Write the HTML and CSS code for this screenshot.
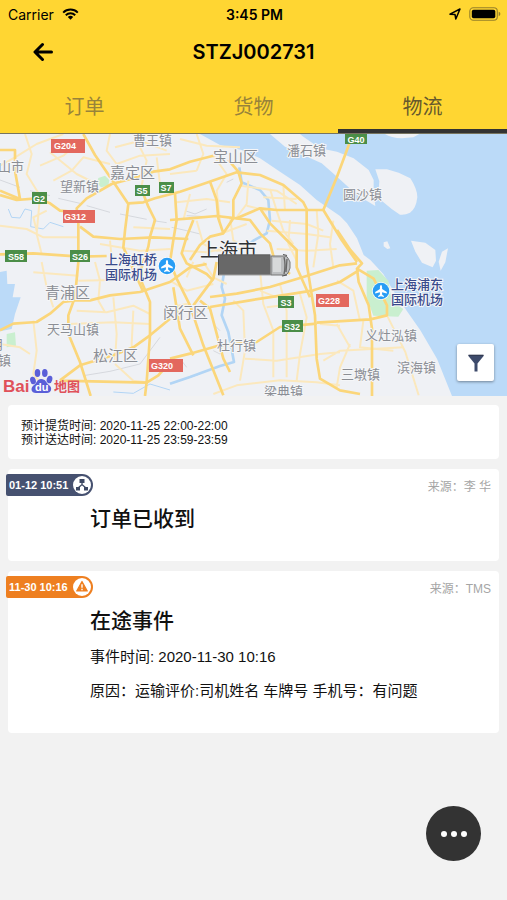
FILE: index.html
```
<!DOCTYPE html>
<html lang="zh-CN">
<head>
<meta charset="utf-8">
<meta name="viewport" content="width=device-width, initial-scale=1">
<title>STZJ002731</title>
<link rel="stylesheet" href="styles.css">
</head>
<body>
<header class="header">
  <div class="status">
    <div class="status-left">
      <span class="carrier">Carrier</span>
      <svg class="wifi" viewBox="0 0 17 12" aria-hidden="true"><path d="M1.2 4.6a10.4 10.4 0 0 1 14.6 0M3.8 7.2a6.7 6.7 0 0 1 9.4 0" fill="none" stroke="#000" stroke-width="2"/><path d="M8.500 11.800 5.800 9a3.800 3.800 0 0 1 5.400 0z"/></svg>
    </div>
    <span class="clock">3:45 PM</span>
    <div class="status-right">
      <svg class="locate" viewBox="0 0 12 12" aria-hidden="true"><path d="M1 6.200 11 1 6.800 11 6 6.500z" fill="none" stroke="#000" stroke-width="1.500" stroke-linejoin="round"/></svg>
      <svg class="battery" viewBox="0 0 32 14" aria-hidden="true"><rect x=".8" y=".8" width="27.500" height="12.400" rx="3.500" fill="none" stroke="#97802a" stroke-width="1.100"/><rect x="2.800" y="2.800" width="23.500" height="8.400" rx="1.800"/><path d="M29.700 4.800q1.700.6 1.700 2.200t-1.700 2.200z" fill="#97802a"/></svg>
    </div>
  </div>
  <div class="titlebar">
    <button class="back" type="button" aria-label="返回"><svg viewBox="0 0 20 20" aria-hidden="true"><path d="M9.500 2.500 2 10l7.500 7.500M2.500 10H18.500" fill="none" stroke="#000" stroke-width="3" stroke-linecap="round" stroke-linejoin="round"/></svg></button>
    <h1>STZJ002731</h1>
  </div>
  <nav class="tabs">
    <a class="tab" href="#order">订单</a>
    <a class="tab" href="#goods">货物</a>
    <a class="tab tab-active" href="#logistics" aria-current="page">物流</a>
  </nav>
</header>

<main>
  <section class="map">
    <svg class="map-canvas" viewBox="0 0 507 262" role="img" aria-label="上海市地图">
      <rect width="507" height="262" fill="#eff1f5"/>
      <g transform="scale(.33333)">
        <g fill="#bbdaf8">
          <path d="M600 0 660 33 725 48 780 73 840 113 900 153 950 198 1020 246 1041 268 1071 313 1091 363 1111 378 1150 420 1180 470 1220 530 1261 589 1311 674 1356 786H1521V0z"/>
          <path d="M0 414 20 410 22 450 45 450 38 490 62 490 45 540 35 585 0 592z"/>
        </g>
        <g fill="#eff1f5">
          <path d="M810 0 855 38 910 63 965 88 1011 128 1071 183 1126 216 1121 178V138L1106 108 1061 73 1011 53 960 43 910 8 900 0z"/>
          <path d="M1126 106H1161L1196 116 1231 133Q1252 165 1252 190 1248 225 1230 236 1215 244 1200 242L1175 225 1145 200 1136 168 1138 142z"/>
          <path d="M1155 0Q1180 18 1240 10L1258 0zM1151 325 1162 322 1171 343 1162 345 1151 337zM1233 320 1276 326 1306 348 1308 380 1298 400 1266 386 1246 353zM1344 343 1326 353 1316 383 1322 410 1336 385z"/>
        </g>
        <g fill="#c9efcf">
          <path d="M295 132 315 125 328 138 325 155 303 160 292 148z"/>
          <path d="M1100 410 1135 408 1165 440 1175 500 1210 525 1195 548 1120 545 1100 490zM20 600 45 595 48 635 20 640z"/>
        </g>
        <g fill="none" stroke="#b2d5f5" stroke-linejoin="round">
          <path stroke-width="8" d="M718 100 725 145 780 168 805 198 810 258 800 298 760 320 730 345M675 400 665 459 675 494 665 544 685 594 702 684 660 696 570 729 510 749"/>
          <path stroke-width="3" d="M25 225 35 250 60 252 75 225 95 230 92 278 130 285 150 265 190 278M340 774 400 778 450 750 510 768M520 747 600 720"/>
        </g>
        <g fill="none" stroke="#c8cbd1" stroke-width="2">
          <path d="M0 138 60 160M90 170 150 185M175 193 240 208M260 215 330 235M360 240 440 256M460 260 500 266M250 725 330 712 420 690 480 610M555 230 585 240 620 225M560 245 620 248M515 280 560 290 600 300M680 145 700 135M560 700 545 680M660 590 645 575M640 650 660 660"/>
        </g>
        <g fill="none" stroke="#fbe8bd" stroke-width="6" stroke-linejoin="round">
          <path d="M0 95 45 70 110 30 190 0M75 0 95 60 80 120 120 185 110 300 125 360M120 95 190 65 240 20M150 55 230 120 290 150M215 110 250 70 330 90M330 0 320 50 350 90 420 65 510 60M400 0 440 80 420 180M470 70 480 150 510 170M345 40 420 20 500 50M160 140 215 110M0 275 80 285 130 310 235 310M140 230 100 250 110 290M330 320 335 370M300 330 420 350 510 345M400 280 510 285"/>
          <path d="M125 384 140 460 160 520M100 415 235 425M235 440 340 438 430 415M285 384 300 440 295 500 315 535M230 530 320 535 400 515 450 540M205 570 340 565 450 570M100 560 110 650 100 720 140 770M340 490 350 600 345 680M400 530 395 630 400 684M0 630 60 640 90 660M345 690 400 740 440 745"/>
          <path d="M590 0 610 60 590 110M540 15 620 35 720 40M640 65 680 120 650 170 660 260M510 120 590 110M530 205 620 195 690 205M550 258 570 180M745 140 740 210 710 250M720 155 830 170 890 210M740 215 800 230M810 165 830 230 850 290 880 330M850 155 855 230M790 190 890 195M815 260 920 270 970 290M870 258 865 330 890 380M800 290 920 300 990 310M830 345 920 350 1010 345M950 228 955 300 940 400M1000 260 990 330 1000 400M550 350 620 355 690 340M590 260 610 330 650 350 720 345M660 300 740 270M690 250 700 320 740 340"/>
          <path d="M700 500 730 530 735 650 720 740M780 410 790 510 820 590 820 730M840 450 860 530 860 730M900 480 920 550 900 660 890 740M735 674 830 680 960 660 1020 655M640 780 710 754 840 739 950 745 1020 754M780 470 830 490M960 570 1020 575M970 680 1020 650 1210 640M1050 630 1020 700 1010 760M1090 560 1080 640 1180 650M1010 570 1050 640M510 440 560 470 640 450M510 520 560 510 600 540M580 384 560 430M610 384 640 430 680 450M1011 440 1060 470 1080 560M800 520 880 510"/>
          <path d="M1161 544 1191 604 1216 654 1256 784"/>
        </g>
        <g fill="none" stroke="#fbd67a" stroke-width="8" stroke-linejoin="round">
          <path d="M250 0 285 63 340 143 385 210 375 290 370 340 390 384 430 474"/>
          <path d="M272 786 240 684 205 599 205 544 225 489 235 384 235 268 230 223 260 193 335 150 400 133 460 113 510 106 570 83 640 65"/>
          <path d="M0 183 50 198 110 193 150 208 180 230 235 235M0 48H45V110L60 195 0 170"/>
          <path d="M240 278 280 308 360 315 460 310 565 315"/>
          <path d="M385 208 430 205 465 193 540 173 620 146 710 115 780 123 850 153 910 205 920 225V388L945 544 950 674 960 734 1020 769 1080 780"/>
          <path d="M430 180 445 218 465 258 450 308 445 338 425 400 425 444 450 504V604L440 744 435 786"/>
          <path d="M0 361 100 358 240 368 320 366"/>
          <path d="M630 143 650 198 655 253 670 298 700 253V198L725 148 715 113 685 78"/>
          <path d="M510 258 570 253 650 246 710 253 780 223 830 228H970L1025 318 1071 384"/>
          <path d="M970 228 1011 128 1055 10M525 178 530 258 520 318 510 384 530 434"/>
          <path d="M710 253 750 258 780 298 810 328 825 384 870 420M780 223 810 268 860 318 890 348 890 400 930 490"/>
          <path d="M580 258 560 308 545 358 560 388 620 420 640 440M670 298 630 308 600 333 570 378"/>
          <path d="M1011 288 1051 348 1086 388 1071 404 1121 434 1161 514V544L1111 556 950 566M1071 404 1076 444 1106 514 1116 584V786"/>
          <path d="M0 589 40 569 110 564 150 539 190 504 225 499 270 499 330 484 420 474 510 444 570 400 620 390"/>
          <path d="M180 739 240 694 290 679 340 664 400 640 450 604 510 554M180 740 440 746 475 724 510 684"/>
          <path d="M510 674 570 659 660 634 770 624 840 579 950 569M530 434 570 514 610 634 670 784M600 500 630 524 670 674 690 714M520 460 540 584 580 664M580 514 640 434 650 384"/>
          <path d="M630 489 710 479 810 459 910 429 1020 394 1071 388M630 519 750 499 880 479 940 469 1020 444 1075 410"/>
        </g>
      </g>

      <g class="shield shield-red">
        <rect x="51" y="5" width="34" height="14"/><text x="65" y="15">G204</text>
        <rect x="63" y="76" width="32" height="13"/><text x="75" y="86">G312</text>
        <rect x="149" y="225" width="34" height="13"/><text x="162" y="235">G320</text>
        <rect x="316" y="160" width="33" height="13"/><text x="329" y="170">G228</text>
      </g>
      <g class="shield shield-green">
        <rect x="345" y="0" width="22" height="10"/><text x="356" y="9">G40</text>
        <rect x="32" y="58" width="15" height="12"/><text x="39" y="68">G2</text>
        <rect x="135" y="51" width="15" height="11"/><text x="142" y="60">S5</text>
        <rect x="159" y="48" width="15" height="11"/><text x="166" y="57">S7</text>
        <rect x="5" y="116" width="22" height="12"/><text x="16" y="126">S58</text>
        <rect x="70" y="116" width="20" height="12"/><text x="80" y="126">S26</text>
        <rect x="278" y="162" width="16" height="12"/><text x="286" y="172">S3</text>
        <rect x="282" y="186" width="21" height="12"/><text x="292" y="196">S32</text>
      </g>
      <g class="place">
        <text x="133" y="11">曹王镇</text><text x="60" y="57">望新镇</text>
        <text x="287" y="21">潘石镇</text><text x="343" y="65">圆沙镇</text>
        <text x="-2" y="37">山市</text><text x="47" y="200">天马山镇</text>
        <text x="-9" y="215">月</text><text x="-2" y="231">镇</text>
        <text x="217" y="216">杜行镇</text><text x="264" y="262">梁典镇</text>
        <text x="365" y="206">义灶泓镇</text><text x="397" y="238">滨海镇</text><text x="341" y="245">三墩镇</text>
      </g>
      <g class="place place-district">
        <text x="110" y="44">嘉定区</text><text x="213" y="28">宝山区</text><text x="45" y="164">青浦区</text>
        <text x="93" y="227">松江区</text><text x="163" y="184">闵行区</text>
      </g>
      <g class="place place-airport">
        <text x="105" y="130">上海虹桥</text><text x="105" y="145">国际机场</text>
        <text x="391" y="155">上海浦东</text><text x="391" y="170">国际机场</text>
      </g>
      <text class="place place-city" x="200" y="123">上海市</text>

      <defs>
        <g id="airport">
          <circle r="9" fill="#fff"/><circle r="8.300" fill="#289df5"/>
          <path d="M0-6.200q1.100.8 1.100 2.200v1.900L5.800 1v1.500L1.100 1.300v2.300l1.800 1.300v1L0 5.200l-2.900.7v-1l1.800-1.300V1.300l-4.700 1.200V1l4.700-3.100V-4q0-1.400 1.100-2.200z" fill="#fff"/>
        </g>
      </defs>
      <use href="#airport" x="167" y="132"/>
      <use href="#airport" x="381" y="157"/>

      <g>
        <rect x="218.500" y="121" width="52" height="20" fill="#686868" stroke="#a2a2a2"/>
        <path d="M218.500 141V121H270" fill="none" stroke="#444"/>
        <path d="M271 122h13.500q3 0 4 3l1.500 3v6l-1.500 4q-1 3-4 3h-13.500z" fill="#bcbec0" stroke="#777"/>
        <path d="M273 124h8v14h-8z" fill="#d7d9da"/>
        <path d="M284 123q2 8 0 17M287 125l-1 13" fill="none" stroke="#666" stroke-width="1.300"/>
        <path d="M283 120.500l4 1M282 142l5-1" stroke="#555" stroke-width="1.200"/>
      </g>

      <g>
        <text class="baidu-red baidu-latin" x="3" y="258">Bai</text>
        <g fill="#5a5fd8">
          <ellipse cx="33" cy="246.500" rx="2.800" ry="3.800" transform="rotate(-15 33 246.500)"/>
          <ellipse cx="37.500" cy="239" rx="2.800" ry="4"/>
          <ellipse cx="44.800" cy="239" rx="2.800" ry="4"/>
          <ellipse cx="49.500" cy="245.500" rx="2.800" ry="3.800" transform="rotate(15 49.500 245.500)"/>
          <path d="M41 245c5 0 5 4 8 6 4 3 2 8-2 8H36c-5 0-6-5-2-8 3-2 3-6 7-6z"/>
        </g>
        <text class="baidu-du" x="35" y="257">du</text>
        <text class="baidu-red baidu-cjk" x="54" y="257">地图</text>
      </g>
    </svg>
    <button class="filter" type="button" aria-label="筛选"><svg viewBox="0 0 18 18" aria-hidden="true"><path d="M1 1.500h16L10.500 9.500v8h-3v-8z" fill="#3d4a6b"/><path d="M1.500 1.300h15" stroke="#252e48" stroke-width="1.200"/></svg></button>
  </section>

  <div class="feed">
    <section class="card schedule">
      <p>预计提货时间: 2020-11-25 22:00-22:00</p>
      <p>预计送达时间: 2020-11-25 23:59-23:59</p>
    </section>

    <article class="card event">
      <div class="event-top">
        <div class="stamp stamp-navy">
          <time>01-12 10:51</time>
          <svg viewBox="0 0 18 18" aria-hidden="true"><circle cx="9" cy="9" r="9" fill="#fff"/><path d="M9 6v3M5 12 9 8.500 13 12" fill="none" stroke="#3e4964" stroke-width="1.300"/><path d="M6.500 3h5v4h-5zM3 11h4v3.500H3zM11 11h4v3.500h-4z" fill="#3e4964"/></svg>
        </div>
        <span class="source">来源：李 华</span>
      </div>
      <div class="event-body">
        <h2>订单已收到</h2>
      </div>
    </article>

    <article class="card event">
      <div class="event-top">
        <div class="stamp stamp-orange">
          <time>11-30 10:16</time>
          <svg viewBox="0 0 18 18" aria-hidden="true"><circle cx="9" cy="9" r="9" fill="#fff"/><path d="M9 3.500 14.300 13H3.700z" fill="#ee7f20" stroke="#ee7f20" stroke-width="1.200" stroke-linejoin="round"/><path d="M9 6.300v3.500M9 10.800v1.500" stroke="#fff" stroke-width="1.400"/></svg>
        </div>
        <span class="source">来源：TMS</span>
      </div>
      <div class="event-body">
        <h2>在途事件</h2>
        <div class="details">
          <p>事件时间: 2020-11-30 10:16</p>
          <p>原因：运输评价:司机姓名 车牌号 手机号：有问题</p>
        </div>
      </div>
    </article>
  </div>
</main>

<button class="more" type="button" aria-label="更多"><svg viewBox="0 0 26 6" aria-hidden="true"><circle cx="3" cy="3" r="3"/><circle cx="13" cy="3" r="3"/><circle cx="23" cy="3" r="3"/></svg></button>
</body>
</html>
```
FILE: styles.css
```
* {
  box-sizing: border-box;
}

body {
  margin: 0;
  min-height: 100vh;
  background: #f2f2f2;
  color: #111;
  font-family: "Liberation Sans", "Noto Sans CJK SC", sans-serif;
}

h1,
h2,
p {
  margin: 0;
}

button {
  display: flex;
  align-items: center;
  justify-content: center;
  padding: 0;
  border: 0;
  cursor: pointer;
}

svg {
  display: block;
}

/* Header */
.header {
  background: #ffd632;
  color: #000;
  font-family: Inter, "Noto Sans CJK SC", sans-serif;
}

.status {
  display: grid;
  grid-template-columns: 1fr auto 1fr;
  align-items: center;
  height: 28px;
  padding: 0 6px 0 8px;
}

.status-left,
.status-right {
  display: flex;
  align-items: center;
  gap: 8px;
}

.status-right {
  justify-content: flex-end;
}

.carrier {
  font-size: 14px;
}

.clock {
  font-size: 14px;
  font-weight: 600;
}

.wifi {
  width: 17px;
  height: 12px;
}

.locate {
  width: 12px;
  height: 12px;
}

.battery {
  width: 32px;
  height: 14px;
}

.titlebar {
  display: grid;
  grid-template-columns: 32px 1fr 32px;
  align-items: center;
  height: 48px;
  padding: 0 27px;
}

.back {
  height: 32px;
  background: none;
}

.back svg {
  width: 20px;
  height: 20px;
}

.titlebar h1 {
  font-size: 20px;
  font-weight: 600;
  text-align: center;
}

.tabs {
  display: grid;
  grid-template-columns: repeat(3, 1fr);
  height: 58px;
  border-bottom: 1px solid #77745f;
}

.tab {
  display: flex;
  align-items: center;
  justify-content: center;
  padding-top: 6px;
  border-bottom: 4px solid transparent;
  color: #98833a;
  font-size: 20px;
  text-decoration: none;
}

.tab-active {
  border-bottom-color: #333;
  color: #66592d;
}

/* Map */
.map {
  position: relative;
}

.map-canvas {
  width: 100%;
  height: auto;
}

.place {
  fill: #8b8e95;
  stroke: #f5f6f8;
  stroke-width: 2px;
  paint-order: stroke;
  font-family: "Noto Sans CJK SC", sans-serif;
  font-size: 13px;
}

.place-district {
  font-size: 15px;
}

.place-airport {
  fill: #3a4b8c;
  font-weight: 500;
}

.place-city {
  fill: #2f3134;
  font-size: 19px;
}

.shield text {
  fill: #fff;
  font-family: "Liberation Sans", sans-serif;
  font-size: 9px;
  font-weight: 700;
  text-anchor: middle;
}

.shield-red {
  fill: #e3685e;
}

.shield-green {
  fill: #4b8e48;
}

.baidu-red {
  fill: #e0515a;
  font-weight: 700;
}

.baidu-latin {
  font-family: "Liberation Sans", sans-serif;
  font-size: 17px;
}

.baidu-cjk {
  font-family: "Noto Sans CJK SC", sans-serif;
  font-size: 13px;
}

.baidu-du {
  fill: #fff;
  font-family: "Liberation Sans", sans-serif;
  font-size: 11px;
  font-weight: 700;
}

.filter {
  position: absolute;
  right: 13px;
  bottom: 15px;
  width: 37px;
  height: 37px;
  border-radius: 2px;
  background: #fff;
  box-shadow: 0 1px 3px rgba(0, 0, 0, 0.4);
}

.filter svg {
  width: 18px;
  height: 18px;
}

/* Cards */
.feed {
  display: grid;
  gap: 10px;
  padding: 9px 8px;
}

.card {
  border-radius: 4px;
  background: #fff;
}

.schedule {
  padding: 14px 13px 12px;
  font-size: 12px;
  line-height: 14px;
}

.event {
  padding: 5px 8px 27px 0;
}

.event-top {
  display: flex;
  align-items: center;
  justify-content: space-between;
}

.stamp {
  display: flex;
  align-items: center;
  gap: 5px;
  height: 22px;
  margin-left: -2px;
  padding: 0 2px 0 3px;
  border-radius: 2px 11px 11px 2px;
  color: #fff;
  font-size: 11px;
  font-weight: 700;
}

.stamp svg {
  width: 18px;
  height: 18px;
}

.stamp-navy {
  background: #465170;
}

.stamp-orange {
  background: #ee7f20;
}

.source {
  color: #a5a5a5;
  font-size: 12px;
}

.event-body {
  padding: 8px 0 0 82px;
}

.event-body h2 {
  font-size: 21px;
  font-weight: 500;
  line-height: 30px;
}

.details {
  display: grid;
  gap: 12px;
  padding: 10px 0 4px;
  font-size: 15px;
  line-height: 22px;
}

/* Floating action */
.more {
  position: fixed;
  right: 26px;
  bottom: 39px;
  width: 55px;
  height: 55px;
  border-radius: 50%;
  background: #333;
  fill: #fff;
}

.more svg {
  width: 26px;
  height: 6px;
}
```
